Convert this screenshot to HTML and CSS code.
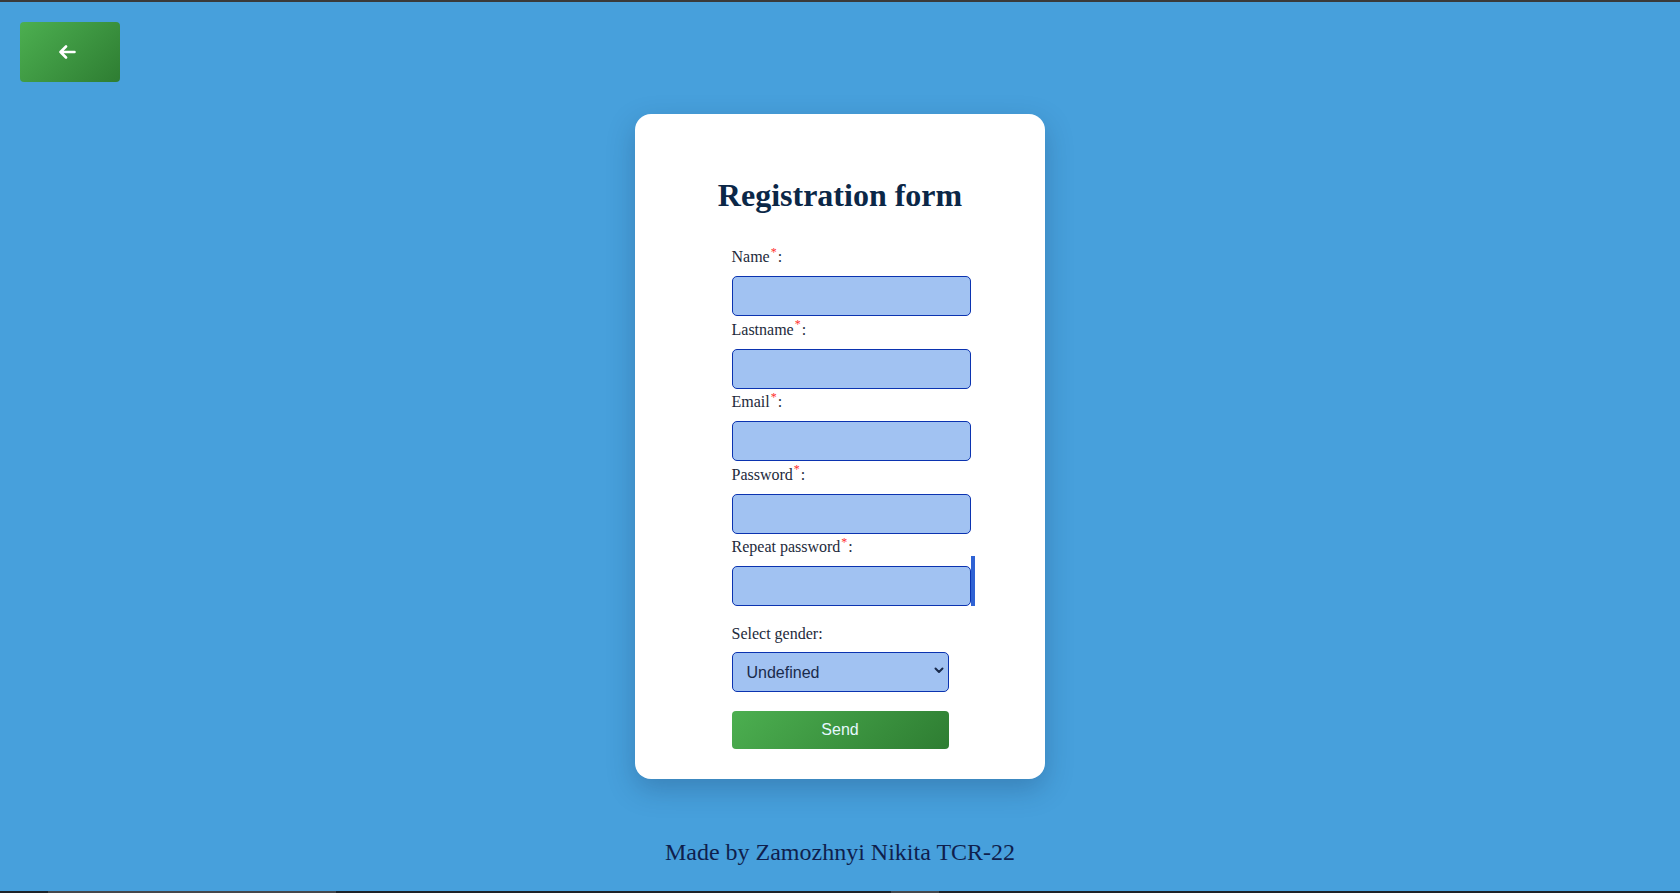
FILE: index.html
```html
<!DOCTYPE html>
<html lang="en">
<head>
<meta charset="utf-8">
<title>Registration form</title>
<link rel="stylesheet" href="styles.css">
</head>
<body>
  <header class="top">
    <button class="back" type="button" aria-label="Back">
      <svg width="18" height="14" viewBox="0 0 18 14" aria-hidden="true">
        <path d="M8 1.5 L2.5 7 L8 12.5 M2.5 7 H16.5" fill="none" stroke="#ffffff" stroke-width="2.6" stroke-linecap="round" stroke-linejoin="round"/>
      </svg>
    </button>
  </header>

  <main class="card">
    <h1 class="title">Registration form</h1>
    <form class="form">
      <div class="field">
        <label class="label">Name<span class="req">*</span>:</label>
        <input class="input" type="text">
      </div>
      <div class="field">
        <label class="label">Lastname<span class="req">*</span>:</label>
        <input class="input" type="text">
      </div>
      <div class="field">
        <label class="label">Email<span class="req">*</span>:</label>
        <input class="input" type="email">
      </div>
      <div class="field">
        <label class="label">Password<span class="req">*</span>:</label>
        <input class="input" type="password">
      </div>
      <div class="field field-last">
        <label class="label">Repeat password<span class="req">*</span>:</label>
        <input class="input" type="password">
        <span class="marker"></span>
      </div>

      <label class="label label-gender">Select gender:</label>
      <div class="select-wrap">
        <select class="select">
          <option>Undefined</option>
          <option>Male</option>
          <option>Female</option>
        </select>
        <svg class="chev" width="10" height="7" viewBox="0 0 10 7" aria-hidden="true">
          <path d="M1.5 1.5 L5 5 L8.5 1.5" fill="none" stroke="#1a2b4c" stroke-width="2" stroke-linecap="round" stroke-linejoin="round"/>
        </svg>
      </div>
      <button class="send" type="button">Send</button>
    </form>
  </main>

  <footer class="footer">Made by Zamozhnyi Nikita TCR-22</footer>

  <div class="bottombar">
    <span class="seg seg-a"></span>
    <span class="seg seg-b"></span>
  </div>
</body>
</html>
```

FILE: styles.css
```css
* {
  box-sizing: border-box;
}

html, body {
  margin: 0;
  padding: 0;
}

body {
  min-height: 100vh;
  display: flex;
  flex-direction: column;
  align-items: center;
  background: #47a0dc;
  border-top: 2px solid #3a3a3a;
  font-family: "Liberation Serif", "Times New Roman", serif;
}

.top {
  align-self: stretch;
  padding: 20px 20px 0;
  display: flex;
}

.back {
  width: 100px;
  height: 60px;
  border: none;
  border-radius: 4px;
  background: linear-gradient(135deg, #4caf50, #2e7d32);
  display: flex;
  align-items: center;
  justify-content: center;
  padding: 0 2px 0 0;
  cursor: pointer;
}

.back svg {
  display: block;
  margin-left: -4px;
  margin-top: 0;
}

.card {
  margin-top: 32px;
  width: 410px;
  background: #ffffff;
  border-radius: 16px;
  box-shadow: 0 10px 28px rgba(20, 50, 90, 0.28);
  padding: 40px 0 30px;
  display: flex;
  flex-direction: column;
  align-items: center;
}

.title {
  margin: 23px 0 33px;
  font-size: 32px;
  line-height: 37px;
  font-weight: bold;
  color: #0b2747;
  text-align: center;
}

.form {
  width: 217px;
  display: flex;
  flex-direction: column;
  margin: 0;
}

.field {
  position: relative;
  display: flex;
  flex-direction: column;
  margin-bottom: 3.5px;
}

.field-last {
  margin-bottom: 17.5px;
}

.label {
  display: block;
  font-size: 16px;
  line-height: 18px;
  padding-top: 1px;
  color: #1d2a3b;
  margin-bottom: 10px;
}

.label-gender {
  margin-bottom: 9.5px;
}

.req {
  color: #ff2a2a;
  font-size: 12px;
  line-height: 0;
  vertical-align: super;
  margin-left: 1px;
  margin-right: 1px;
}

.input {
  display: block;
  width: 239px;
  height: 40px;
  padding: 0 10px;
  background: #a1c2f2;
  border: 1px solid #0b33b0;
  border-radius: 5px;
  font-family: "Liberation Sans", Arial, sans-serif;
  font-size: 16px;
  outline: none;
}

.marker {
  position: absolute;
  left: 239px;
  bottom: 0;
  width: 4px;
  height: 50px;
  background: #2f62d4;
}

.select-wrap {
  position: relative;
  width: 217px;
  height: 40px;
  margin-bottom: 18.7px;
}

.select {
  display: block;
  width: 100%;
  height: 100%;
  appearance: none;
  -webkit-appearance: none;
  background: #a1c2f2;
  border: 1px solid #0b33b0;
  border-radius: 5px;
  padding: 0 30px 0 14px;
  font-family: "Liberation Sans", Arial, sans-serif;
  font-size: 16px;
  color: #1a2b4c;
  outline: none;
}

.chev {
  position: absolute;
  right: 5px;
  top: 15px;
  pointer-events: none;
}

.send {
  width: 217px;
  height: 38px;
  border: none;
  border-radius: 4px;
  background: linear-gradient(135deg, #4caf50, #2e7d32);
  color: #e6f8ff;
  font-family: "Liberation Sans", Arial, sans-serif;
  font-size: 16px;
  cursor: pointer;
  padding: 0;
}

.footer {
  margin-top: 60px;
  font-size: 24px;
  line-height: 27.6px;
  color: #0f1f4d;
  text-align: center;
}

.bottombar {
  margin-top: auto;
  align-self: stretch;
  height: 2px;
  background: #1e2328;
  display: flex;
}

.seg {
  display: block;
  height: 2px;
  background: #45484c;
}

.seg-a {
  margin-left: 48px;
  width: 288px;
}

.seg-b {
  margin-left: 555px;
  width: 48px;
}
```
